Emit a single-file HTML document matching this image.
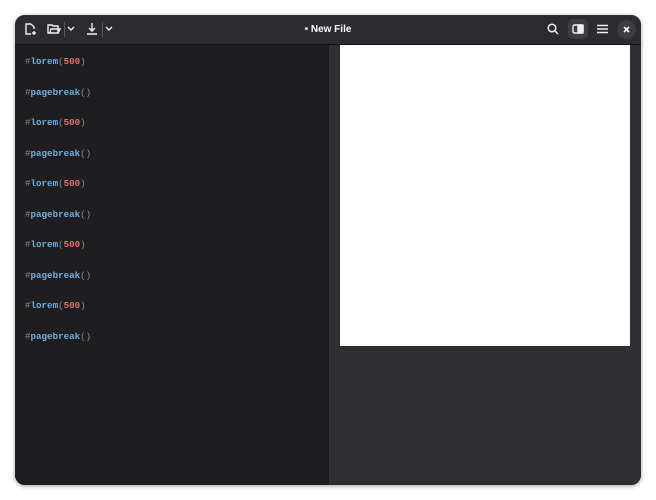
<!DOCTYPE html><html><head><style>
body{margin:0;width:656px;height:500px;background:#fff;position:relative;overflow:hidden;font-family:"Liberation Sans",sans-serif}
.win{position:absolute;left:15px;top:15px;width:626px;height:470px;border-radius:10px;overflow:hidden;background:#1e1e20;box-shadow:0 1px 4px rgba(0,0,0,.4)}
.hb{position:absolute;left:0;top:0;width:626px;height:29px;background:#2c2c30;border-bottom:1px solid #111}
.ed{position:absolute;left:0;top:30px;width:314px;height:440px;background:#1e1e20;border-right:1px solid #333}
.pv{position:absolute;left:315px;top:30px;width:311px;height:440px;background:#2e2e33}
.pg{position:absolute;left:10px;top:0;width:290px;height:301px;background:#fff}
.code{position:absolute;left:10px;top:2px;font-family:"Liberation Mono",monospace;font-size:9.2px;line-height:30.5px;color:#8a8a8a}
.f{color:#6fb0e0;font-weight:bold}.n{color:#e06c6c;font-weight:bold}
.t{position:absolute;top:9px;left:0;width:626px;text-align:center;color:#fff;font-size:10px;font-weight:bold}
svg{position:absolute}
</style></head><body><div class="win">
<div class="hb">
<svg style="left:8px;top:7px" width="14" height="14" viewBox="0 0 14 14" fill="none" stroke="#eee" stroke-width="1.4"><path d="M8 2H3v10h5M8 2l3 3v2M11 9v4M9 11h4"/></svg>
<svg style="left:32px;top:8px" width="14" height="12" viewBox="0 0 14 12" fill="none" stroke="#eee" stroke-width="1.4"><path d="M1 2h4l1 1h5v7H1zM3 10l1-4h9l-2 4"/></svg>
<div style="position:absolute;left:49px;top:7px;width:1px;height:15px;background:#555"></div>
<svg style="left:52px;top:11px" width="8" height="6" viewBox="0 0 8 6" fill="none" stroke="#eee" stroke-width="1.4"><path d="M1 1l3 3 3-3"/></svg>
<svg style="left:71px;top:7px" width="12" height="14" viewBox="0 0 12 14" fill="none" stroke="#eee" stroke-width="1.4"><path d="M6 1v8M3 6l3 3 3-3M1 12h10"/></svg>
<div style="position:absolute;left:87px;top:7px;width:1px;height:15px;background:#555"></div>
<svg style="left:90px;top:11px" width="8" height="6" viewBox="0 0 8 6" fill="none" stroke="#eee" stroke-width="1.4"><path d="M1 1l3 3 3-3"/></svg>
<div class="t">• New File</div>
<svg style="left:532px;top:8px" width="12" height="12" viewBox="0 0 12 12" fill="none" stroke="#eee" stroke-width="1.5"><circle cx="5" cy="5" r="3.8"/><path d="M8 8l3 3"/></svg>
<div style="position:absolute;left:553px;top:4px;width:20px;height:20px;border-radius:5px;background:#3d3d42"></div>
<svg style="left:557px;top:9px" width="12" height="10" viewBox="0 0 12 10" fill="none" stroke="#eee" stroke-width="1.4"><rect x="1" y="1" width="10" height="8" rx="1.5"/><rect x="6" y="1" width="5" height="8" fill="#eee"/></svg>
<svg style="left:582px;top:9px" width="11" height="10" viewBox="0 0 11 10" stroke="#eee" stroke-width="1.4"><path d="M0 1.5h11M0 5h11M0 8.5h11"/></svg>
<div style="position:absolute;left:602px;top:5px;width:19px;height:19px;border-radius:50%;background:#3d3d42"></div>
<svg style="left:608px;top:11px" width="7" height="7" viewBox="0 0 7 7" stroke="#fff" stroke-width="1.6"><path d="M1 1l5 5M6 1l-5 5"/></svg>
</div>
<div class="ed"><div class="code">
#<span class="f">lorem</span>(<span class="n">500</span>)<br>#<span class="f">pagebreak</span>()<br>#<span class="f">lorem</span>(<span class="n">500</span>)<br>#<span class="f">pagebreak</span>()<br>#<span class="f">lorem</span>(<span class="n">500</span>)<br>#<span class="f">pagebreak</span>()<br>#<span class="f">lorem</span>(<span class="n">500</span>)<br>#<span class="f">pagebreak</span>()<br>#<span class="f">lorem</span>(<span class="n">500</span>)<br>#<span class="f">pagebreak</span>()
</div></div>
<div class="pv"><div class="pg"></div></div>
</div></body></html>
